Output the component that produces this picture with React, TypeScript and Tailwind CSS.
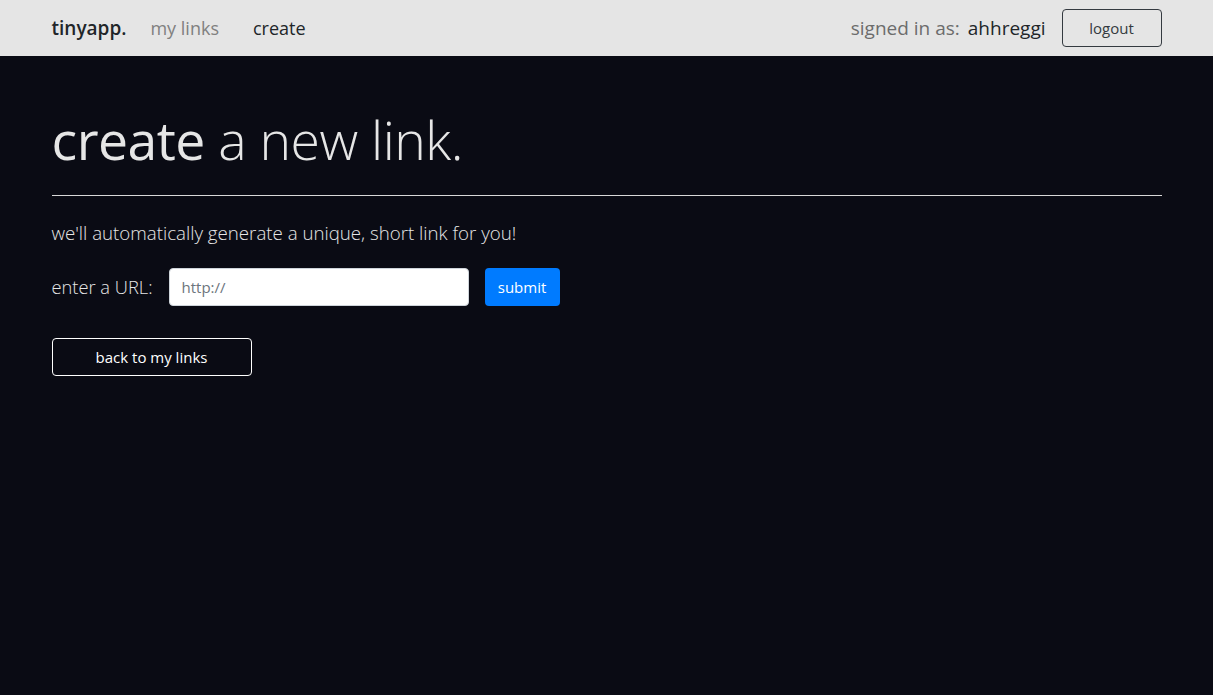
import React from 'react';

const App: React.FC = () => {
  return (
    <div className="min-h-screen w-full bg-[#0a0b14] font-['Open_Sans','Noto_Sans',sans-serif]">
      <nav className="h-14 bg-[#e5e5e5] flex items-center">
        <div className="w-[1110px] mx-auto flex items-center justify-between">
          <div className="flex items-center">
            <span className="text-[19px] font-semibold text-[#212529] mr-6">tinyapp.</span>
            <span className="text-[18px] text-[#808080] mr-[34px]">my links</span>
            <span className="text-[18px] text-[#212529]">create</span>
          </div>
          <div className="flex items-center">
            <span className="text-[19px] text-[#6c6c6c] mr-2">signed in as:</span>
            <span className="text-[19px] text-[#212529] mr-4">ahhreggi</span>
            <button className="w-[100px] h-[38px] border border-[#343a40] rounded text-[15px] text-[#343a40]">
              logout
            </button>
          </div>
        </div>
      </nav>

      <main className="w-[1110px] mx-auto pt-[48px]">
        <h1 className="text-[53.5px] leading-[72px] font-light text-[#e6e6e6] tracking-[-0.5px]">
          <span className="font-normal">create</span> a new link.
        </h1>
        <hr className="mt-[19px] border-t border-[#d8d8d8]" />
        <p className="mt-[24px] text-[18.7px] font-light text-[#e6e6e6] leading-[26px]">
          we'll automatically generate a unique, short link for you!
        </p>
        <form className="mt-[22px] flex items-center" onSubmit={(e) => e.preventDefault()}>
          <label className="text-[18.3px] font-light text-[#e6e6e6] mr-4">enter a URL:</label>
          <input
            type="text"
            placeholder="http://"
            className="w-[300px] h-[38px] bg-white rounded border border-[#ced4da] px-3 text-[15px] text-[#495057] placeholder:text-[#6c757d] outline-none"
          />
          <button className="ml-4 w-[75px] h-[38px] bg-[#007bff] rounded text-white text-[15px]">
            submit
          </button>
        </form>
        <button className="mt-[32px] w-[200px] h-[38px] border border-white rounded text-white text-[15px]">
          back to my links
        </button>
      </main>
    </div>
  );
};

export default App;
